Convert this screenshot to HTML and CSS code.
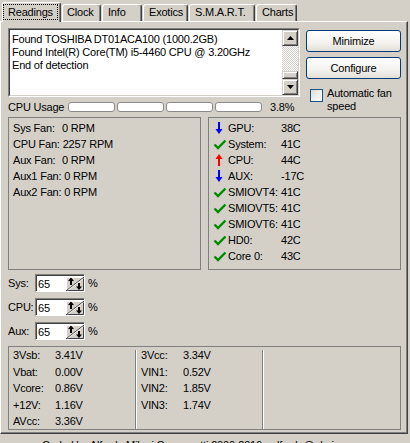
FILE: index.html
```html
<!DOCTYPE html>
<html>
<head>
<meta charset="utf-8">
<title>SpeedFan</title>
<link rel="stylesheet" href="styles.css">
</head>
<body>
<div class="window">
  <div class="tabs">
    <div class="tab active w-readings"><span class="focus">Readings</span></div>
    <div class="tab w-clock">Clock</div>
    <div class="tab w-info">Info</div>
    <div class="tab w-exotics">Exotics</div>
    <div class="tab w-smart">S.M.A.R.T.</div>
    <div class="tab w-charts">Charts</div>
  </div>
  <div class="panel">
    <div class="top">
      <div class="left-col">
        <div class="log">
          <div class="log-inner">
            <div class="log-text">
              <div>Found TOSHIBA DT01ACA100 (1000.2GB)</div>
              <div>Found Intel(R) Core(TM) i5-4460 CPU @ 3.20GHz</div>
              <div>End of detection</div>
            </div>
            <div class="vscroll">
              <div class="sbtn"><svg width="7" height="4" viewBox="0 0 7 4"><polygon points="3.5,0 7,4 0,4" fill="#000"/></svg></div>
              <div class="track"></div>
              <div class="thumb"></div>
              <div class="sbtn"><svg width="7" height="4" viewBox="0 0 7 4"><polygon points="0,0 7,0 3.5,4" fill="#000"/></svg></div>
            </div>
          </div>
        </div>
        <div class="cpu-row">
          <span class="cpu-label">CPU Usage</span>
          <div class="bars">
            <div class="bar"></div>
            <div class="bar"></div>
            <div class="bar"></div>
            <div class="bar"></div>
          </div>
          <span class="pct">3.8%</span>
        </div>
      </div>
      <div class="right-col">
        <div class="btn">Minimize</div>
        <div class="btn">Configure</div>
        <div class="check">
          <span class="box"></span>
          <span class="check-label">Automatic fan speed</span>
        </div>
      </div>
    </div>

    <div class="mid">
      <div class="group fans">
        <div class="row"><span class="flabel">Sys Fan:</span>0 RPM</div>
        <div class="row"><span class="flabel">CPU Fan:</span>2257 RPM</div>
        <div class="row"><span class="flabel">Aux Fan:</span>0 RPM</div>
        <div class="row"><span class="flabel">Aux1 Fan:</span>0 RPM</div>
        <div class="row"><span class="flabel">Aux2 Fan:</span>0 RPM</div>
      </div>
      <div class="group temps">
        <div class="row"><svg class="ic" width="14" height="14" viewBox="0 0 14 14"><rect x="5" y="1" width="2" height="8" fill="#0000ff"/><polygon points="2.5,8 9.5,8 6,13" fill="#0000ff"/></svg><span class="tlabel">GPU:</span>38C</div>
        <div class="row"><svg class="ic" width="14" height="14" viewBox="0 0 14 14"><polyline points="1.5,7.5 5,11 12.5,3.5" fill="none" stroke="#008c00" stroke-width="2.4"/></svg><span class="tlabel">System:</span>41C</div>
        <div class="row"><svg class="ic" width="14" height="14" viewBox="0 0 14 14"><rect x="5" y="5" width="2" height="8" fill="#ff0000"/><polygon points="2.5,6 9.5,6 6,1" fill="#ff0000"/></svg><span class="tlabel">CPU:</span>44C</div>
        <div class="row"><svg class="ic" width="14" height="14" viewBox="0 0 14 14"><rect x="5" y="1" width="2" height="8" fill="#0000ff"/><polygon points="2.5,8 9.5,8 6,13" fill="#0000ff"/></svg><span class="tlabel">AUX:</span>-17C</div>
        <div class="row"><svg class="ic" width="14" height="14" viewBox="0 0 14 14"><polyline points="1.5,7.5 5,11 12.5,3.5" fill="none" stroke="#008c00" stroke-width="2.4"/></svg><span class="tlabel">SMIOVT4:</span>41C</div>
        <div class="row"><svg class="ic" width="14" height="14" viewBox="0 0 14 14"><polyline points="1.5,7.5 5,11 12.5,3.5" fill="none" stroke="#008c00" stroke-width="2.4"/></svg><span class="tlabel">SMIOVT5:</span>41C</div>
        <div class="row"><svg class="ic" width="14" height="14" viewBox="0 0 14 14"><polyline points="1.5,7.5 5,11 12.5,3.5" fill="none" stroke="#008c00" stroke-width="2.4"/></svg><span class="tlabel">SMIOVT6:</span>41C</div>
        <div class="row"><svg class="ic" width="14" height="14" viewBox="0 0 14 14"><polyline points="1.5,7.5 5,11 12.5,3.5" fill="none" stroke="#008c00" stroke-width="2.4"/></svg><span class="tlabel">HD0:</span>42C</div>
        <div class="row"><svg class="ic" width="14" height="14" viewBox="0 0 14 14"><polyline points="1.5,7.5 5,11 12.5,3.5" fill="none" stroke="#008c00" stroke-width="2.4"/></svg><span class="tlabel">Core 0:</span>43C</div>
      </div>
    </div>

    <div class="speeds">
      <div class="srow">
        <span class="slabel">Sys:</span>
        <div class="field"><span class="fval">65</span><svg class="spin" width="18" height="14" viewBox="0 0 18 14"><rect width="18" height="14" fill="#d4d0c8"/><path d="M0.5 13.5V0.5H17.5" stroke="#fff" fill="none"/><path d="M0 13.5H17.5V0" stroke="#404040" fill="none"/><path d="M0.5 13.5L17.5 0.5" stroke="#404040" fill="none"/><path d="M1.5 13.5L17.5 1.5" stroke="#fff" fill="none" opacity="0.7"/><rect x="4" y="3" width="2" height="5" fill="#000"/><polygon points="2,4 5,0.5 8,4" fill="#000"/><rect x="12" y="6" width="2" height="4" fill="#000"/><polygon points="10,9.5 16,9.5 13,13" fill="#000"/></svg></div>
        <span class="unit">%</span>
      </div>
      <div class="srow">
        <span class="slabel">CPU:</span>
        <div class="field"><span class="fval">65</span><svg class="spin" width="18" height="14" viewBox="0 0 18 14"><rect width="18" height="14" fill="#d4d0c8"/><path d="M0.5 13.5V0.5H17.5" stroke="#fff" fill="none"/><path d="M0 13.5H17.5V0" stroke="#404040" fill="none"/><path d="M0.5 13.5L17.5 0.5" stroke="#404040" fill="none"/><path d="M1.5 13.5L17.5 1.5" stroke="#fff" fill="none" opacity="0.7"/><rect x="4" y="3" width="2" height="5" fill="#000"/><polygon points="2,4 5,0.5 8,4" fill="#000"/><rect x="12" y="6" width="2" height="4" fill="#000"/><polygon points="10,9.5 16,9.5 13,13" fill="#000"/></svg></div>
        <span class="unit">%</span>
      </div>
      <div class="srow">
        <span class="slabel">Aux:</span>
        <div class="field"><span class="fval">65</span><svg class="spin" width="18" height="14" viewBox="0 0 18 14"><rect width="18" height="14" fill="#d4d0c8"/><path d="M0.5 13.5V0.5H17.5" stroke="#fff" fill="none"/><path d="M0 13.5H17.5V0" stroke="#404040" fill="none"/><path d="M0.5 13.5L17.5 0.5" stroke="#404040" fill="none"/><path d="M1.5 13.5L17.5 1.5" stroke="#fff" fill="none" opacity="0.7"/><rect x="4" y="3" width="2" height="5" fill="#000"/><polygon points="2,4 5,0.5 8,4" fill="#000"/><rect x="12" y="6" width="2" height="4" fill="#000"/><polygon points="10,9.5 16,9.5 13,13" fill="#000"/></svg></div>
        <span class="unit">%</span>
      </div>
    </div>

    <div class="group volts">
      <div class="vcol">
        <div class="vrow"><span class="vlabel">3Vsb:</span>3.41V</div>
        <div class="vrow"><span class="vlabel">Vbat:</span>0.00V</div>
        <div class="vrow"><span class="vlabel">Vcore:</span>0.86V</div>
        <div class="vrow"><span class="vlabel">+12V:</span>1.16V</div>
        <div class="vrow"><span class="vlabel">AVcc:</span>3.36V</div>
      </div>
      <div class="vsep"></div>
      <div class="vcol">
        <div class="vrow"><span class="vlabel">3Vcc:</span>3.34V</div>
        <div class="vrow"><span class="vlabel">VIN1:</span>0.52V</div>
        <div class="vrow"><span class="vlabel">VIN2:</span>1.85V</div>
        <div class="vrow"><span class="vlabel">VIN3:</span>1.74V</div>
      </div>
      <div class="vsep"></div>
      <div class="vcol"></div>
    </div>
  </div>
  <div class="footer">Coded by Alfredo Milani Comparetti 2000-2016 - alfredo@almico.com</div>
</div>
</body>
</html>
```

FILE: styles.css
```css
html, body {
  margin: 0;
  padding: 0;
  width: 410px;
  height: 443px;
  overflow: hidden;
  background: #d4d0c8;
}

body {
  font-family: "Liberation Sans", Arial, sans-serif;
  font-size: 11px;
  letter-spacing: -0.2px;
  color: #000;
}

.window {
  width: 410px;
  height: 443px;
  overflow: hidden;
}

/* ---------- tabs ---------- */
.tabs {
  display: flex;
  align-items: flex-end;
  height: 21px;
  padding-left: 2px;
  position: relative;
  z-index: 2;
}

.tab {
  box-sizing: border-box;
  height: 17px;
  margin-right: 1px;
  padding-left: 4px;
  line-height: 15px;
  border: 1px solid;
  border-color: #fff #404040 transparent #fff;
  border-bottom: none;
  border-radius: 3px 3px 0 0;
  box-shadow: inset -1px 0 #808080;
  background: #d4d0c8;
  white-space: nowrap;
}

.tab.active {
  height: 20px;
  margin-bottom: -1px;
  padding-left: 0;
}

.focus {
  display: inline-block;
  box-sizing: border-box;
  height: 16px;
  margin-top: 1px;
  padding: 0 4px 0 4px;
  line-height: 14px;
  border: 1px dotted #000;
}

.w-readings { width: 59px; }
.w-clock { width: 39px; }
.w-info { width: 40px; padding-left: 5px; }
.w-exotics { width: 45px; padding-left: 5px; }
.w-smart { width: 66px; padding-left: 5px; }
.w-charts { width: 41px; padding-left: 5px; }

/* ---------- panel ---------- */
.panel {
  box-sizing: border-box;
  width: 408px;
  height: 413px;
  border: 1px solid;
  border-color: #fff #404040 #404040 #fff;
  box-shadow: inset -1px -1px #808080;
  padding: 6px 6px 0 7px;
  position: relative;
  z-index: 1;
}

.top {
  display: flex;
  gap: 6px;
  height: 85px;
}

.left-col {
  width: 292px;
  display: flex;
  flex-direction: column;
}

.log {
  box-sizing: border-box;
  height: 69px;
  border: 1px solid;
  border-color: #808080 #fff #fff #808080;
}

.log-inner {
  box-sizing: border-box;
  height: 100%;
  display: flex;
  border: 1px solid;
  border-color: #404040 #d4d0c8 #d4d0c8 #404040;
  background: #fff;
}

.log-text {
  flex: 1;
  padding: 3px 0 0 2px;
  line-height: 13px;
  white-space: nowrap;
  overflow: hidden;
}

.vscroll {
  width: 16px;
  display: flex;
  flex-direction: column;
}

.sbtn {
  box-sizing: border-box;
  height: 16px;
  display: flex;
  align-items: center;
  justify-content: center;
  background: #d4d0c8;
  border: 1px solid;
  border-color: #d4d0c8 #404040 #404040 #d4d0c8;
  box-shadow: inset 1px 1px #fff, inset -1px -1px #808080;
}

.track {
  flex: 1;
  background: repeating-conic-gradient(#fff 0 25%, #d4d0c8 0 50%) 0 0 / 2px 2px;
}

.thumb {
  box-sizing: border-box;
  height: 8px;
  background: #d4d0c8;
  border: 1px solid;
  border-color: #d4d0c8 #404040 #404040 #d4d0c8;
  box-shadow: inset 1px 1px #fff, inset -1px -1px #808080;
}

.cpu-row {
  display: flex;
  align-items: center;
  height: 11px;
  margin-top: 4px;
}

.cpu-label {
  width: 60px;
  white-space: nowrap;
}

.bars {
  display: flex;
  gap: 2px;
}

.bar {
  box-sizing: border-box;
  width: 47px;
  height: 10px;
  border: 1px solid #8a8a8a;
  border-radius: 3px;
  background: #fff;
}

.pct {
  margin-left: 8px;
}

.right-col {
  width: 95px;
  padding-top: 2px;
  display: flex;
  flex-direction: column;
}

.btn {
  box-sizing: border-box;
  height: 22px;
  margin-bottom: 5px;
  border: 1px solid #003c74;
  border-radius: 3px;
  background: linear-gradient(#ffffff, #f3f2ee 60%, #e2dfd6);
  text-align: center;
  line-height: 20px;
}

.check {
  display: flex;
  align-items: flex-start;
  margin-top: 5px;
  padding-left: 4px;
}

.box {
  box-sizing: border-box;
  flex: none;
  width: 13px;
  height: 13px;
  border: 1px solid #1c5180;
  background: linear-gradient(135deg, #dcdcd7, #fff);
}

.check-label {
  margin-left: 4px;
  margin-top: -2px;
  line-height: 13px;
  width: 74px;
}

/* ---------- groups ---------- */
.mid {
  display: flex;
  gap: 7px;
  height: 153px;
  margin-top: 4px;
}

.group {
  box-sizing: border-box;
  border: 1px solid #808080;
}

.fans, .temps {
  width: 193px;
  padding: 2px 0 0 4px;
}

.row {
  height: 16px;
  line-height: 16px;
  display: flex;
  align-items: center;
  white-space: nowrap;
}

.flabel {
  display: inline-block;
  min-width: 46px;
  margin-right: 3px;
}

.ic {
  flex: none;
  display: block;
}

.tlabel {
  display: inline-block;
  min-width: 53px;
  margin-left: 1px;
}

/* ---------- speeds ---------- */
.speeds {
  display: flex;
  flex-direction: column;
  gap: 6px;
  margin-top: 4px;
  height: 66px;
}

.srow {
  display: flex;
  align-items: center;
  height: 18px;
}

.slabel {
  width: 27px;
}

.field {
  box-sizing: border-box;
  width: 50px;
  height: 18px;
  display: flex;
  align-items: center;
  border: 1px solid;
  border-color: #808080 #fff #fff #808080;
  box-shadow: inset 1px 1px #404040;
  background: #fff;
  padding: 1px 0 0 1px;
}

.fval {
  flex: 1;
  padding-left: 1px;
}

.spin {
  display: block;
  flex: none;
}

.unit {
  margin-left: 3px;
}

/* ---------- voltages ---------- */
.volts {
  display: grid;
  grid-template-columns: 126px 2px 125px 2px 1fr;
  height: 84px;
  margin-top: 6px;
}

.vcol {
  padding-left: 4px;
}

.vrow {
  height: 16.5px;
  line-height: 16.5px;
  white-space: nowrap;
}

.vlabel {
  display: inline-block;
  width: 42px;
}

.vsep {
  margin: 3px 0 1px;
  border-left: 1px solid #808080;
  border-right: 1px solid #fff;
}

/* ---------- footer ---------- */
.footer {
  margin-top: 5px;
  line-height: 13px;
  text-align: center;
  white-space: nowrap;
}
```
